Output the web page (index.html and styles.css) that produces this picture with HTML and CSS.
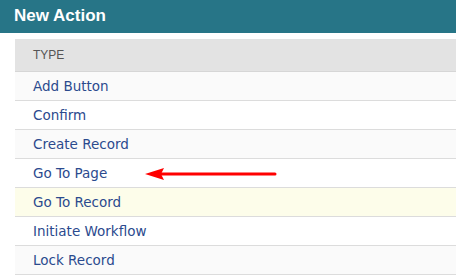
FILE: index.html
```html
<!DOCTYPE html>
<html>
<head>
    <meta http-equiv="Content-Type" content="text/html; charset=utf-8" />
    <title>New Action</title>
    <link rel="stylesheet" href="styles.css">
</head>
<body>

<div class="panel-title">New Action</div>

<div class="action-list">
    <div class="action-head">TYPE</div>
    <div class="action-row odd">Add Button</div>
    <div class="action-row">Confirm</div>
    <div class="action-row odd">Create Record</div>
    <div class="action-row marked">
        Go To Page
        <svg class="pointer" width="140" height="16" viewBox="0 0 140 16">
            <line x1="14" y1="8" x2="131" y2="8" stroke="#ff0000" stroke-width="3" stroke-linecap="round"/>
            <polygon points="1,8 20,2 17,8 20,14" fill="#ff0000"/>
        </svg>
    </div>
    <div class="action-row hover">Go To Record</div>
    <div class="action-row">Initiate Workflow</div>
    <div class="action-row odd">Lock Record</div>
</div>

</body>
</html>
```

FILE: styles.css
```css
body{
    padding: 0px;margin: 0px;font-family: "Liberation Sans", Arial, sans-serif;background: #fff;
}

/*标题栏*/
.panel-title{
    height: 33px;line-height: 31px;padding: 0px 14px;
    background: #277587;color: #fff;
    font-size: 17px;font-weight: bold;
}

/*列表*/
.action-list{
    margin: 6px 0px 0px 15px;
}
.action-head{
    height: 32px;line-height: 33px;padding-left: 18px;
    background: #e3e3e3;color: #555;font-size: 12px;
    border-bottom: 1px solid #d6d6d6;
}
.action-row{
    position: relative;
    height: 28px;line-height: 29px;padding-left: 18px;
    background: #fff;color: #2b4a8e;font-size: 13.5px;
    font-family: "DejaVu Sans", Verdana, sans-serif;
    border-bottom: 1px solid #dcdcdc;
}
.action-row.odd{background: #fafafa;}
.action-row.hover{background: #fdfdea;}

/*红色箭头*/
.pointer{
    position: absolute;left: 129px;top: 7px;
}
```
